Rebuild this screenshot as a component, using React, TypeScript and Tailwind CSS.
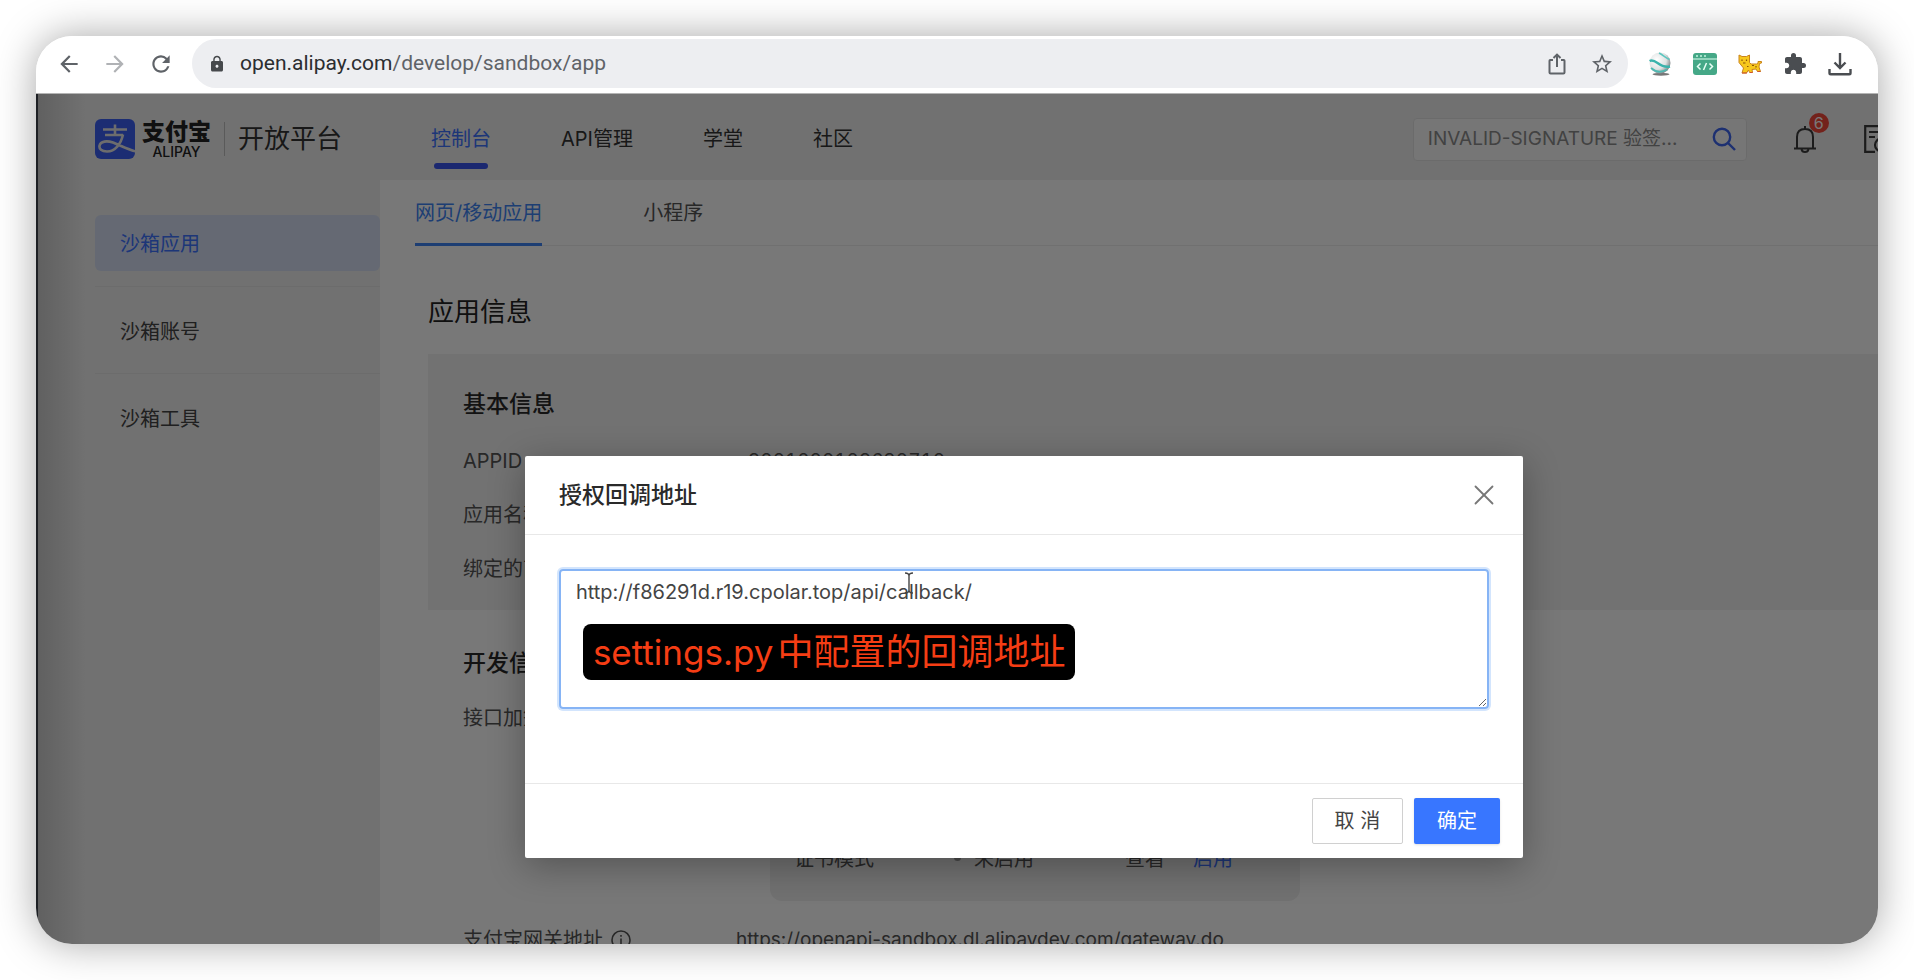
import { LuX } from "react-icons/lu";
import { MdArrowBack, MdArrowForward, MdExtension, MdLock, MdRefresh, MdStarBorder } from "react-icons/md";

const navItems = ["API管理", "学堂", "社区"];
const sideItems = ["沙箱账号", "沙箱工具"];

const basicInfo = [
  { label: "APPID", value: "9021000129632710" },
  { label: "应用名称", value: "" },
  { label: "绑定的商家账号", value: "" },
];

function ShareIcon() {
  return (
    <svg viewBox="0 0 18 22" className="h-[22px] w-[18px]" fill="none" stroke="#5f6368" strokeWidth="2">
      <path d="M5 7H2.2Q1.5 7 1.5 7.8V19.4Q1.5 20.5 2.6 20.5H15.4Q16.5 20.5 16.5 19.4V7.8Q16.5 7 15.8 7H13" />
      <path d="M9 14V2M5.5 5L9 1.6L12.5 5" />
    </svg>
  );
}

function GlobeIcon() {
  return (
    <svg viewBox="0 0 24 24" className="size-6 shrink-0">
      <defs>
        <radialGradient id="ball" cx="35%" cy="35%" r="75%">
          <stop offset="0" stopColor="#ffffff" />
          <stop offset="0.6" stopColor="#dfe2e2" />
          <stop offset="1" stopColor="#6d7375" />
        </radialGradient>
      </defs>
      <ellipse cx="13" cy="22.2" rx="8.5" ry="1.5" fill="#777" />
      <circle cx="12" cy="11" r="10.5" fill="url(#ball)" />
      <path d="M1.6 9C8 5.500 11 17 22 14.500" fill="none" stroke="#3bb3ac" strokeWidth="2.4" />
      <path d="M11 1C15 3 18 6 21.500 7.500" fill="none" stroke="#5cc6bf" strokeWidth="1.6" />
      <path d="M3 16C8 20.500 14 20.500 19 17.500" fill="none" stroke="#4fb9b2" strokeWidth="1.8" />
    </svg>
  );
}

function CodeIcon() {
  return (
    <svg viewBox="0 0 24 22" className="h-[22px] w-6 shrink-0">
      <rect width="24" height="22" rx="3" fill="#45a887" />
      <path d="M0 6H24" stroke="#e0fff2" strokeWidth="1.2" />
      <path d="M3 3H5M7 3H9M11 3H13" stroke="#c5f3e1" strokeWidth="1.6" />
      <path d="M7.5 10.5L4.5 13.5L7.5 16.5M16.5 10.5L19.5 13.5L16.5 16.5M13.5 10L10.5 17" fill="none" stroke="#e8fff6" strokeWidth="1.5" />
    </svg>
  );
}

function CatIcon() {
  return (
    <svg viewBox="0 0 24 20" className="h-5 w-6 shrink-0">
      <path
        d="M1 1L4 2.500H8.500L11.500 1V8.500L13 10H18.500L20 9.500V7.500H23.500V9L21.500 9.500L21 13L22.500 17.500H19.500L18 15L14 15.500L14.500 18.500H11.500L10.500 16L8.500 19H4L5.500 14L3 11L1 8.500Z"
        fill="#f7c81c"
        stroke="#c9831d"
        strokeWidth="1"
      />
      <path d="M4 5.500V7M8.500 5.500V7M5 9H7.500M14 11.500H16M18 12V13.500M9 12.500H10.500" stroke="#8a5408" strokeWidth="1.2" />
      <path d="M4 19H9M12 18.500H14.500M19.500 17.500H22.500" stroke="#d0532e" strokeWidth="1.2" />
    </svg>
  );
}

function DownloadIcon() {
  return (
    <svg viewBox="0 0 24 24" className="size-6 shrink-0" fill="none" stroke="#4a4d51" strokeWidth="2.4">
      <path d="M12 1V15M6.500 10.500L12 16L17.500 10.500" />
      <path d="M1.500 17V21Q1.500 22.300 2.800 22.300H21.200Q22.500 22.300 22.500 21V17" />
    </svg>
  );
}

function SearchIcon() {
  return (
    <svg viewBox="0 0 24 24" className="size-6" fill="none" stroke="#3e66f0" strokeWidth="2.4">
      <circle cx="10" cy="10" r="8.2" />
      <path d="M16 16L23 23" />
    </svg>
  );
}

function BellIcon() {
  return (
    <svg viewBox="0 0 22 28" className="h-7 w-[22px]" fill="none" stroke="#3c3c3c" strokeWidth="2">
      <path d="M11 1V4M3 23V12Q3 4 11 4Q19 4 19 12V23M0 23.5H22" />
      <path d="M7.5 24Q8 27 11 27Q14 27 14.5 24" />
    </svg>
  );
}

function DocIcon() {
  return (
    <svg viewBox="0 0 26 28" className="h-7 w-[26px] shrink-0" fill="none" stroke="#3c3c3c" strokeWidth="2.2">
      <path d="M22 9V1.2H1.2V26.8H11M5 7H17M5 12H11" />
      <circle cx="17.5" cy="20" r="6.5" />
      <path d="M17.5 16V20L20 22" />
    </svg>
  );
}

function AlipayMark() {
  return (
    <svg viewBox="0 0 40 40" className="size-10">
      <rect width="40" height="40" rx="6" fill="#3d60f5" />
      <g fill="none" stroke="#e8e8e8">
        <path d="M8 10.500H32M20 5.500V16M10 16H28" strokeWidth="2.6" />
        <path
          d="M28 15.500C26 25 20 32.500 12 32.500C6.500 32.500 4 30 4.500 26.800C5.500 22 12 21.500 18 23.500C26 26.500 32 30.500 41 32.500"
          strokeWidth="2.6"
        />
      </g>
    </svg>
  );
}

function BrowserBar() {
  return (
    <div className="flex items-center border-b border-[#b4b4b4] bg-white pt-[3px] pb-[5px] pl-5 text-[#5f6368]">
      <div className="flex w-[136px] shrink-0 items-center gap-5">
        <button aria-label="Back"><MdArrowBack className="size-[26px]" /></button>
        <button aria-label="Forward" className="text-[#b0b2b5]"><MdArrowForward className="size-[26px]" /></button>
        <button aria-label="Reload"><MdRefresh className="size-[26px]" /></button>
      </div>
      <div className="flex h-[49px] flex-1 items-center rounded-full bg-[#edeef1] pr-[14px] pl-4">
        <MdLock className="size-[18px] text-[#46494c]" />
        <a href="https://open.alipay.com/develop/sandbox/app" className="ml-[14px] font-[Roboto,sans-serif] text-[21px] text-[#5f6368]">
          <span className="text-[#2b2d30]">open.alipay.com</span>/develop/sandbox/app
        </a>
        <div className="ml-auto flex items-center gap-6">
          <button aria-label="Share"><ShareIcon /></button>
          <button aria-label="Bookmark"><MdStarBorder className="size-6" /></button>
        </div>
      </div>
      <div className="flex w-[250px] shrink-0 items-center gap-[21px] overflow-hidden pl-5">
        <GlobeIcon />
        <CodeIcon />
        <CatIcon />
        <MdExtension className="size-6 shrink-0 text-[#4a4d51]" />
        <DownloadIcon />
      </div>
    </div>
  );
}

function Header() {
  return (
    <header className="flex h-[86px] shrink-0 items-center pt-1 pr-[117px] pl-[57px] text-xl text-[#333]">
      <AlipayMark />
      <div className="ml-[7px] flex flex-col items-center text-[#222]">
        <span className="text-[23px] leading-[26px] font-black">支付宝</span>
        <span className="text-sm leading-[14px] font-medium">ALIPAY</span>
      </div>
      <div className="mx-[13px] h-[34px] w-px bg-[#c0c0c0]" />
      <span className="text-[26px]">开放平台</span>
      <nav className="ml-[89px] flex gap-[70px]">
        <a href="#console" className="relative text-[#3e73ff]">
          控制台
          <span className="absolute inset-x-[3px] top-[38px] h-[6px] rounded-sm bg-[#3a55ee]" />
        </a>
        {navItems.map((item) => (
          <a key={item} href="#nav">{item}</a>
        ))}
      </nav>
      <div className="ml-auto flex h-[43px] w-[334px] items-center rounded border border-[#e4e4e4] bg-[#fbfbfb] pr-[10px] pl-[14px]">
        <input
          aria-label="搜索"
          placeholder="INVALID-SIGNATURE 验签..."
          className="min-w-0 flex-1 bg-transparent text-[19px] outline-none placeholder:text-[#8c8c8c]"
        />
        <button aria-label="搜索"><SearchIcon /></button>
      </div>
      <button aria-label="通知" className="relative ml-[47px]">
        <BellIcon />
        <span className="absolute -top-3 left-[15px] flex size-5 items-center justify-center rounded-full bg-[#f5483b] text-base leading-5 text-white">
          6
        </span>
      </button>
      <button aria-label="文档" className="ml-12"><DocIcon /></button>
    </header>
  );
}

function Sidebar() {
  return (
    <aside className="w-[342px] shrink-0 pt-[35px] pl-[57px] text-xl text-[#444]">
      <a href="#app" className="flex h-14 items-center rounded-md bg-[#d6e0f5] pt-[2px] pl-[25px] text-[#3e73ff]">沙箱应用</a>
      {sideItems.map((item) => (
        <a key={item} href="#side" className="mt-[15px] flex h-[72px] items-center border-t border-[#e6e6e6] pt-[18px] pl-[25px]">
          {item}
        </a>
      ))}
    </aside>
  );
}

function Content() {
  return (
    <main className="flex-1 bg-white pl-[35px] text-xl text-[#555]">
      <div className="flex h-[66px] gap-[101px] border-b border-[#eee]">
        <a href="#web" className="h-[66px] border-b-[3px] border-[#3e85f5] pt-[18px] leading-[30px] text-[#3e85f5]">网页/移动应用</a>
        <a href="#mini" className="pt-[18px] leading-[30px]">小程序</a>
      </div>
      <div className="pl-[13px]">
        <h1 className="mt-12 text-[26px] leading-9 text-[#222]">应用信息</h1>
        <section className="mt-6 h-[256px] bg-[#f2f2f2] pt-[34px] pl-[35px]">
          <h2 className="text-[23px] leading-8 font-medium text-[#2a2a2a]">基本信息</h2>
          <dl className="mt-[14px]">
            {basicInfo.map((row) => (
              <div key={row.label} className="flex h-[54px] items-center">
                <dt className="w-[285px]">{row.label}</dt>
                <dd className="text-[19px] tabular-nums">{row.value}</dd>
              </div>
            ))}
          </dl>
        </section>
        <section className="pt-[37px] pl-[35px]">
          <h2 className="text-[23px] leading-8 font-medium text-[#2a2a2a]">开发信息</h2>
          <div className="mt-6 flex leading-[30px]">
            <span className="w-[307px]">接口加签方式</span>
            <div className="flex h-[198px] w-[530px] items-end rounded-xl bg-[#f0f0f0] pb-7 pl-6 leading-7">
              <span className="w-[160px]">证书模式</span>
              <span className="mr-[13px] mb-3 size-[7px] rounded-full bg-[#999]" />
              <span className="w-[151px]">未启用</span>
              <span className="mr-7">查看</span>
              <a href="#enable" className="text-[#3e73ff]">启用</a>
            </div>
          </div>
          <div className="mt-6 flex items-center leading-[30px]">
            <div className="flex w-[273px] items-center gap-2">
              支付宝网关地址
              <svg viewBox="0 0 20 20" className="size-5" fill="none" stroke="#555" strokeWidth="1.6">
                <circle cx="10" cy="10" r="9" />
                <path d="M10 8.500V15M10 5V6.800" />
              </svg>
            </div>
            <span className="text-[19px]">https://openapi-sandbox.dl.alipaydev.com/gateway.do</span>
          </div>
        </section>
      </div>
    </main>
  );
}

function CallbackDialog() {
  return (
    <div role="dialog" aria-labelledby="dialog-title" className="w-[998px] rounded-xs bg-white text-xl text-[#444] shadow-[0_8px_36px_rgba(0,0,0,0.3)]">
      <div className="flex h-[79px] items-center justify-between border-b border-[#e8e8e8] pr-[22px] pl-[34px]">
        <h2 id="dialog-title" className="text-[23px] font-medium text-[#2a2a2a]">授权回调地址</h2>
        <button aria-label="关闭"><LuX className="size-[34px] text-[#777]" strokeWidth={1.3} /></button>
      </div>
      <div className="relative px-[34px] pt-[34px] pb-[74px]">
        <textarea
          aria-labelledby="dialog-title"
          defaultValue="http://f86291d.r19.cpolar.top/api/callback/"
          className="block h-[140px] w-full rounded-sm border-2 border-[#86b4f5] px-[15px] py-[6px] leading-[30px] shadow-[0_0_0_2px_#d3e5fd] outline-none"
        />
        <svg viewBox="0 0 10 22" className="absolute top-[37px] left-[379px] h-[22px] w-[10px]" fill="none" stroke="#444" strokeWidth="1.4">
          <path d="M1 1Q5 1 5 4V18Q5 21 1 21M9 1Q5 1 5 4M5 18Q5 21 9 21" />
        </svg>
        <div className="absolute top-[89px] left-[58px] flex items-baseline rounded-lg bg-black px-[10px] text-[35px] leading-[56px] text-[#f53d14]">
          settings.py<span className="ml-1 text-[36px]">中配置的回调地址</span>
        </div>
      </div>
      <div className="flex h-[75px] items-center justify-end gap-[11px] border-t border-[#e8e8e8] pr-[23px]">
        <button className="h-[46px] w-[91px] rounded-xs border border-[#d0d0d0]">取 消</button>
        <button className="h-[46px] w-[86px] rounded-xs bg-[#3876ff] text-white shadow-sm">确定</button>
      </div>
    </div>
  );
}

export default function App() {
  return (
    <div className="h-screen bg-white p-9 font-[Inter,'Noto_Sans_CJK_SC',sans-serif]">
      <div className="flex h-full flex-col overflow-hidden rounded-[36px] shadow-[0_0_40px_rgba(0,0,0,0.35)]">
        <BrowserBar />
        <div className="relative min-h-0 flex-1 overflow-hidden border-l-2 border-[#1d2024]">
          <div className="flex min-h-full w-[107%] flex-col bg-[#f0f0f0]">
            <Header />
            <div className="flex flex-1">
              <Sidebar />
              <Content />
            </div>
          </div>
          <div className="absolute inset-y-0 left-0 flex w-[107%] items-start justify-center bg-black/53 pt-[362px] pl-[3px]">
            <CallbackDialog />
          </div>
          <div className="absolute inset-y-0 left-0 w-12 bg-linear-to-r from-black/15 to-transparent" />
        </div>
      </div>
    </div>
  );
}
